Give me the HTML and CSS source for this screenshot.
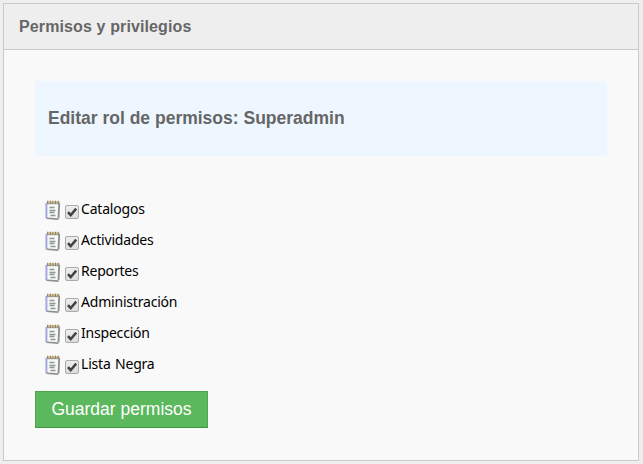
FILE: index.html
```html
<!DOCTYPE html>
<html lang="es">
<head>
<meta charset="utf-8">
<title>Permisos y privilegios</title>
<link rel="stylesheet" href="styles.css">
</head>
<body>
<svg width="0" height="0" class="defs">
  <symbol id="note" viewBox="0 0 16 20">
    <path d="M1.5 2.5h13.3l-.8 16.6-12.7-.5z" fill="#f6f8f7"/>
    <path d="M1.4 2.8v15.4" stroke="#a6a6e0" stroke-width="2"/>
    <path d="M14.2 3l-.7 15.4" stroke="#8c8c8c" stroke-width="1.8"/>
    <path d="M1.5 18.3l11.9.8" stroke="#8f8f8f" stroke-width="1.6"/>
    <path d="M2 2.8h12.5" stroke="#a5a398" stroke-width="2.8"/>
    <path d="M2.7 .7v3M5.3 .7v3M7.9 .7v3M10.5 .7v3M13.1 .7v3" stroke="#8c7c60" stroke-width="1"/>
    <path d="M4 1v2M6.6 1v2M9.2 1v2M11.8 1v2" stroke="#e0c98c" stroke-width="1.2"/>
    <path d="M4.5 7.5h5M4.5 10.5h6M4.5 12.5h5M5.5 15.5h5" stroke="#8d9895" stroke-width="1.3"/>
  </symbol>
  <symbol id="check" viewBox="0 0 14 14">
    <path d="M3 7.2l2.7 3L11.2 3.6" fill="none" stroke="#414141" stroke-width="2.5"/>
  </symbol>
</svg>
<section class="panel">
  <header class="panel-head">Permisos y privilegios</header>
  <div class="panel-body">
    <h1 class="banner">Editar rol de permisos: Superadmin</h1>
    <ul class="list">
      <li class="row"><svg class="note"><use href="#note"/></svg><span class="box"><svg><use href="#check"/></svg></span><span class="label">Catalogos</span></li>
      <li class="row"><svg class="note"><use href="#note"/></svg><span class="box"><svg><use href="#check"/></svg></span><span class="label">Actividades</span></li>
      <li class="row"><svg class="note"><use href="#note"/></svg><span class="box"><svg><use href="#check"/></svg></span><span class="label">Reportes</span></li>
      <li class="row"><svg class="note"><use href="#note"/></svg><span class="box"><svg><use href="#check"/></svg></span><span class="label">Administración</span></li>
      <li class="row"><svg class="note"><use href="#note"/></svg><span class="box"><svg><use href="#check"/></svg></span><span class="label">Inspección</span></li>
      <li class="row"><svg class="note"><use href="#note"/></svg><span class="box"><svg><use href="#check"/></svg></span><span class="label">Lista Negra</span></li>
    </ul>
    <button class="save" type="button">Guardar permisos</button>
  </div>
</section>
</body>
</html>
```

FILE: styles.css
```css
* { box-sizing: border-box; }
body {
  margin: 0;
  padding: 3px;
  background: #eee;
  font-family: "Liberation Sans", Arial, sans-serif;
}
.defs { display: none; }
.panel {
  width: 636px;
  height: 458px;
  border: 1px solid #cbcbcb;
  background: #f9f9f9;
}
.panel-head {
  height: 46px;
  padding-left: 15px;
  border-bottom: 1px solid #cbcbcb;
  background: #eee;
  color: #666;
  font-size: 16px;
  font-weight: bold;
  line-height: 45px;
  letter-spacing: 0.12px;
}
.panel-body { padding: 31px 31px 0 31px; }
.banner {
  height: 75px;
  margin: 0 0 38px;
  padding-left: 13px;
  background: #eef7ff;
  color: #666;
  font-size: 17.5px;
  line-height: 74px;
}
.list {
  margin: 0;
  padding: 0 0 0 10px;
  list-style: none;
}
.row {
  display: flex;
  align-items: center;
  height: 31px;
}
.note {
  width: 16px;
  height: 20px;
  margin-right: 4px;
}
.box {
  display: flex;
  width: 14px;
  height: 14px;
  margin: 4px 2px 0 0;
  border: 1px solid #aaa;
  border-radius: 2px;
  background: linear-gradient(#eee, #dcdcdc);
}
.box svg {
  width: 14px;
  height: 14px;
  margin: -1px;
}
.label {
  color: #000;
  font-family: "Noto Sans", sans-serif;
  font-size: 14px;
  line-height: 20px;
  margin-top: -1px;
  letter-spacing: -0.2px;
  word-spacing: 1px;
}
.save {
  display: block;
  width: 173px;
  height: 37px;
  margin-top: 11px;
  padding: 0;
  border: 1px solid #4da64d;
  border-bottom-color: #3f963f;
  background: #5cb85c;
  color: #fff;
  font-family: inherit;
  font-size: 17.5px;
  line-height: 35px;
}
```
